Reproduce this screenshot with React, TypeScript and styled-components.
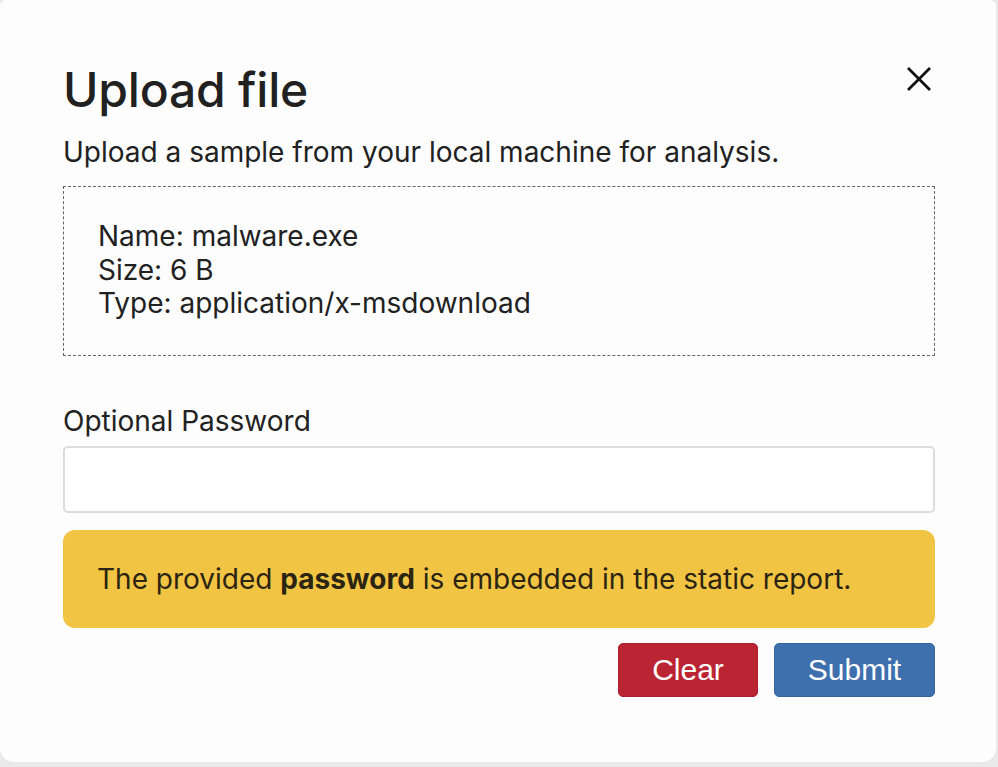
import React, { useState } from 'react';
import styled, { createGlobalStyle } from 'styled-components';

const GlobalStyle = createGlobalStyle`
  html, body {
    margin: 0;
    padding: 0;
    background: #e9e9e9;
  }
  body {
    font-family: Inter, "Noto Sans", "Liberation Sans", sans-serif;
    color: #212121;
  }
`;

const Modal = styled.div`
  box-sizing: border-box;
  width: 996px;
  height: 762px;
  background: #fdfdfd;
  border-radius: 6px 6px 14px 14px;
  padding: 61px 61px 0 63px;
  display: flex;
  flex-direction: column;
`;

const Header = styled.div`
  display: flex;
  align-items: flex-start;
  justify-content: space-between;
`;

const Title = styled.h2`
  margin: 0;
  font-size: 48px;
  line-height: 57.6px;
  font-weight: 500;
  letter-spacing: -0.2px;
`;

const CloseButton = styled.button`
  border: 0;
  background: transparent;
  padding: 0;
  margin: 6px 4px 0 0;
  width: 24px;
  height: 24px;
  cursor: pointer;
  display: flex;
`;

const Subtitle = styled.p`
  margin: 17px 0 0 0;
  font-size: 28px;
  line-height: 33.6px;
`;

const FileBox = styled.div`
  margin-top: 17px;
  border: 1.6px dashed #666;
  padding: 33px 34px 34px 34px;
  font-size: 28px;
  line-height: 33.6px;
`;

const FileLine = styled.div``;

const Label = styled.label`
  display: block;
  margin-top: 49px;
  font-size: 28px;
  line-height: 33.6px;
`;

const Input = styled.input`
  box-sizing: border-box;
  display: block;
  margin-top: 7px;
  width: 100%;
  height: 67px;
  border: 2px solid #dcdcdc;
  border-radius: 5px;
  background: #fff;
  font-size: 28px;
  padding: 0 18px;
  outline: none;
`;

const Alert = styled.div`
  margin-top: 17px;
  background: #f2c443;
  border-radius: 12px;
  padding: 33px 34px 32px 34px;
  font-size: 28px;
  line-height: 33.6px;
  color: #2b2412;

  strong {
    font-weight: 700;
  }
`;

const Actions = styled.div`
  margin-top: 15px;
  display: flex;
  justify-content: flex-end;
  gap: 16px;
`;

const ActionButton = styled.button<{ tone: 'danger' | 'primary' }>`
  height: 54px;
  min-width: ${(p) => (p.tone === 'danger' ? '140px' : '161px')};
  border: 1px solid ${(p) => (p.tone === 'danger' ? '#a81f2b' : '#3665a0')};
  border-radius: 5px;
  background: ${(p) => (p.tone === 'danger' ? '#bb2533' : '#3e70ad')};
  color: #fff;
  font-family: "Liberation Sans", Arial, sans-serif;
  font-size: 30px;
  padding: 0 20px;
  cursor: pointer;
`;

const file = {
  name: 'malware.exe',
  size: '6 B',
  type: 'application/x-msdownload',
};

export default function App() {
  const [password, setPassword] = useState('');

  return (
    <>
      <GlobalStyle />
      <Modal>
        <Header>
          <Title>Upload file</Title>
          <CloseButton aria-label="Close">
            <svg width="24" height="24" viewBox="0 0 24 24">
              <path d="M2 2 L22 22 M22 2 L2 22" stroke="#111" strokeWidth="2.8" strokeLinecap="square" />
            </svg>
          </CloseButton>
        </Header>
        <Subtitle>Upload a sample from your local machine for analysis.</Subtitle>
        <FileBox>
          <FileLine>Name: {file.name}</FileLine>
          <FileLine>Size: {file.size}</FileLine>
          <FileLine>Type: {file.type}</FileLine>
        </FileBox>
        <Label htmlFor="pw">Optional Password</Label>
        <Input id="pw" value={password} onChange={(e) => setPassword(e.target.value)} />
        <Alert>
          The provided <strong>password</strong> is embedded in the static report.
        </Alert>
        <Actions>
          <ActionButton tone="danger" onClick={() => setPassword('')}>Clear</ActionButton>
          <ActionButton tone="primary">Submit</ActionButton>
        </Actions>
      </Modal>
    </>
  );
}
